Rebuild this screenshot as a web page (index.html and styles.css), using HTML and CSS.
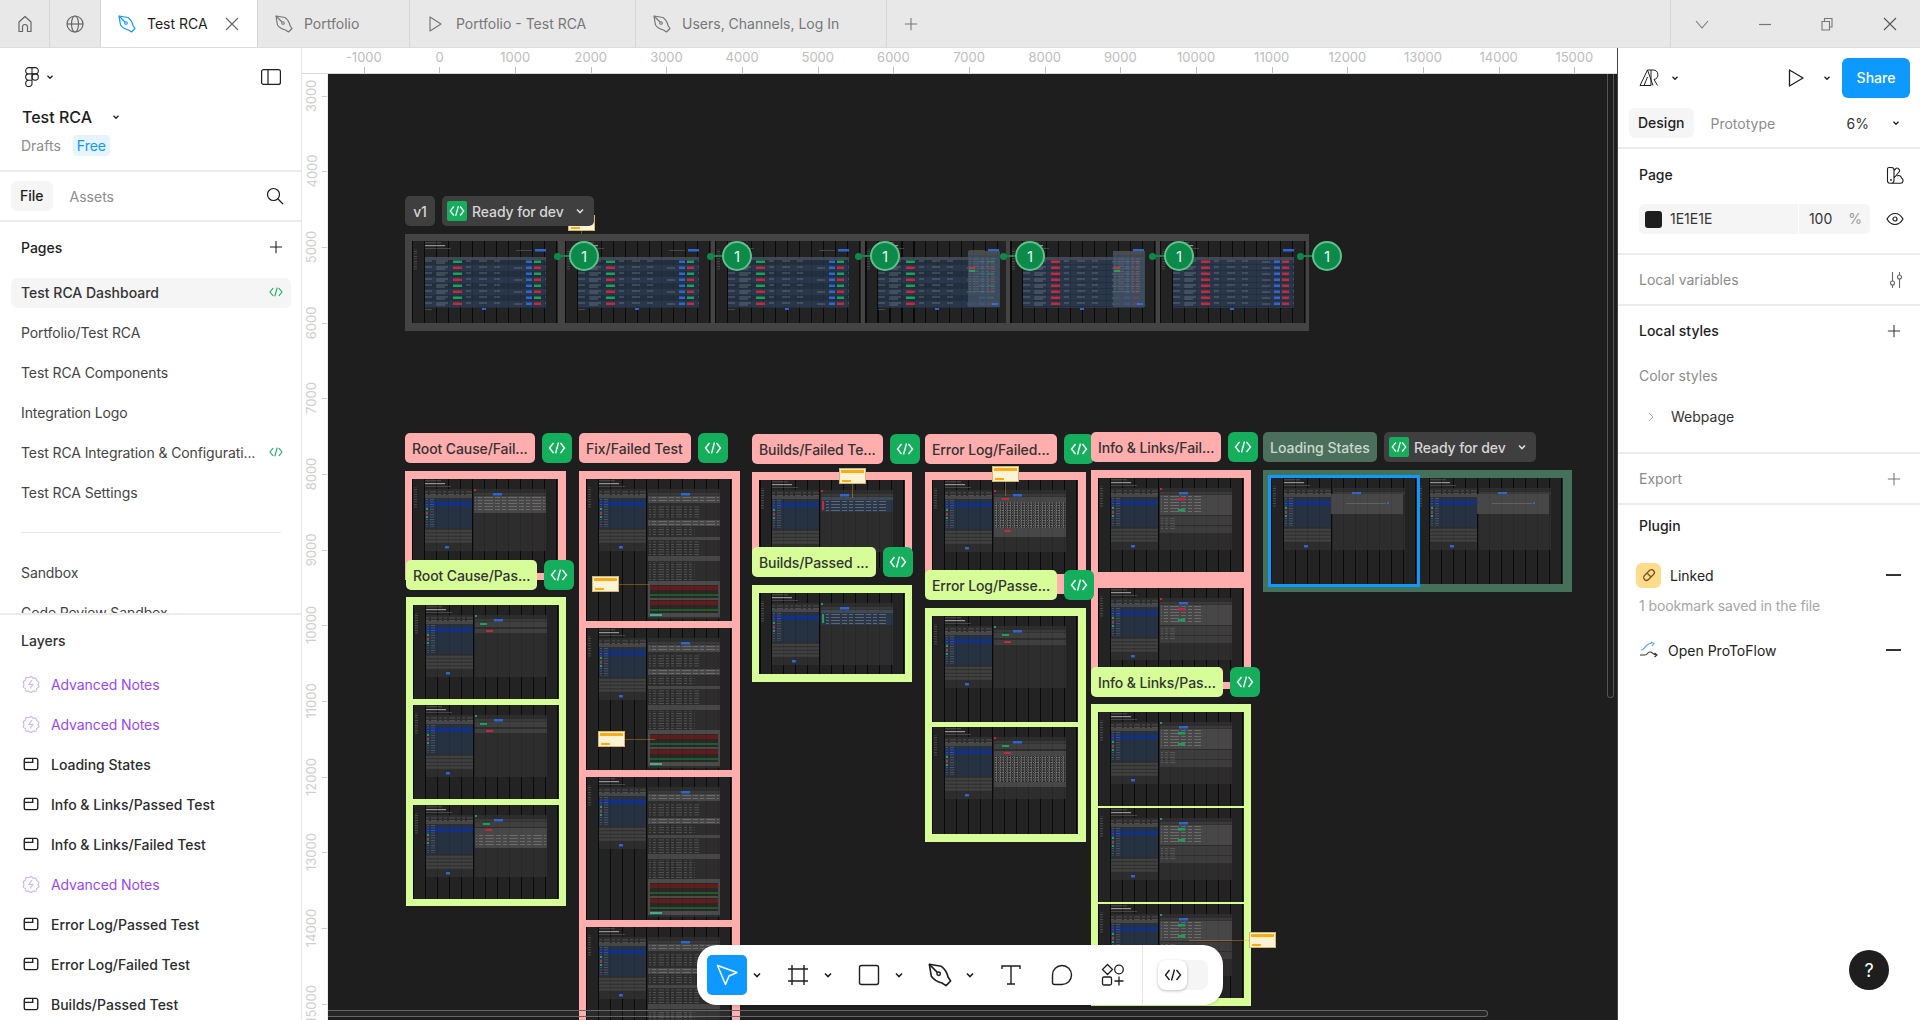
FILE: index.html
```html
<!DOCTYPE html>
<html lang="en">
<head>
    <meta charset="UTF-8">
    <title>Test RCA</title>
    <link rel="stylesheet" href="styles.css">
</head>
<body>
    <!-- shared icons and the tiny frame previews -->
    <svg class="defs" aria-hidden="true">
        <symbol id="i-nib" viewBox="0 0 18 18"><path d="M1 1 10 2.500Q14 5.500 15 10.500L17 13.500 13.500 17 10.500 15Q5.500 14 2.500 10Z" fill="none" stroke="currentColor" stroke-width="1.200" stroke-linejoin="round"/><path d="M1 1 7 7" stroke="currentColor" stroke-width="1.200"/><circle cx="8" cy="8" r="1.300" fill="none" stroke="currentColor" stroke-width="1.100"/></symbol>
        <symbol id="i-chev" viewBox="0 0 10 10"><path d="M2.500 3.800 5 6.300l2.500-2.500" fill="none" stroke="currentColor" stroke-width="1.300"/></symbol>
        <symbol id="i-plus" viewBox="0 0 16 16"><path d="M8 1v14M1 8h14" stroke="currentColor" stroke-width="1.200"/></symbol>
        <symbol id="i-code" viewBox="0 0 20 20"><path d="M6.500 5 2.500 10l4 5M13.500 5l4 5-4 5M11.500 4.500l-3 11" fill="none" stroke="currentColor" stroke-width="1.400"/></symbol>
        <symbol id="i-frame" viewBox="0 0 16 16"><path d="M2 4.500A1.500 1.500 0 0 1 3.500 3h9A1.500 1.500 0 0 1 14 4.500v7a1.500 1.500 0 0 1-1.500 1.500h-9A1.500 1.500 0 0 1 2 11.500zM2 6.500h7.500V3" fill="none" stroke="#1e1e1e" stroke-width="1.200"/></symbol>
        <symbol id="i-note" viewBox="0 0 18 18"><path d="m9 1.500 2.200 1.600 2.700-.1.800 2.600 2.200 1.600L16 9.500l.9 2.600-2.200 1.500-.8 2.600-2.700-.1L9 17.700l-2.200-1.600-2.700.1-.8-2.600-2.200-1.500.9-2.600-.9-2.700 2.200-1.600.8-2.600 2.700.1z" fill="none" stroke="#cdb4f5" stroke-width="1.100"/><path d="M10 5 7 9.500h4L8 13.500" fill="none" stroke="#cdb4f5" stroke-width="1.100"/></symbol>

        <pattern id="txt" width="24" height="3" patternUnits="userSpaceOnUse"><path d="M0 .5h9M11 .5h5M18 .5h4" stroke="#a0a0a0" stroke-width=".6"/></pattern>
        <pattern id="txt-dim" width="18" height="2.500" patternUnits="userSpaceOnUse"><path d="M0 .5h6M8 .5h3M13 .5h3" stroke="#808080" stroke-width=".6"/></pattern>
        <pattern id="noise" width="7" height="2.500" patternUnits="userSpaceOnUse"><path d="M0 .5h2M3 .5h1M5 .5h1.500M1 1.700h1.500M4 1.700h2" stroke="#d0d0d0" stroke-width=".6"/></pattern>
        <pattern id="row-rg" width="121" height="12" patternUnits="userSpaceOnUse"><rect width="121" height="6" fill="#2c3d55"/><rect y="6" width="121" height="6" fill="#223245"/><rect x="1" y="1.500" width="7" height="2.500" fill="#f02b42"/><rect x="1" y="7.500" width="7" height="2.500" fill="#18c268"/><rect x="41" y="1.500" width="9" height="2.500" fill="#f02b42"/><rect x="41" y="7.500" width="9" height="2.500" fill="#18c268"/><rect x="114" y="1.500" width="6" height="2.500" fill="#3078ff"/><rect x="114" y="7.500" width="6" height="2.500" fill="#3078ff"/><path d="M12 2h8M24 2h12M24 4h9M54 2h5M67 2h8M82 2h6M102 3h8M12 8h8M24 8h12M24 10h9M54 8h5M67 8h8M82 8h6" stroke="#98a2ad" stroke-width=".6"/></pattern>
        <pattern id="row-red" width="121" height="6" patternUnits="userSpaceOnUse"><rect width="121" height="6" fill="#2c3d55"/><rect y="5.500" width="121" height=".5" fill="#1c2838"/><rect x="1" y="1.500" width="7" height="2.500" fill="#f02b42"/><rect x="41" y="1.500" width="9" height="2.500" fill="#f02b42"/><rect x="114" y="1.500" width="6" height="2.500" fill="#3078ff"/><path d="M12 2h8M24 2h12M24 4h9M54 2h5M67 2h8M82 2h6M102 3h8" stroke="#98a2ad" stroke-width=".6"/></pattern>

        <symbol id="t-head" overflow="visible">
            <rect x="2" y="8" width="3" height="22" fill="url(#txt-dim)"/>
            <rect x="13" y="1.500" width="16" height=".7" fill="#777"/>
            <rect x="13" y="4" width="20" height="1.200" fill="#b0b0b0"/>
            <rect x="13" y="7" width="26" height=".7" fill="#666"/>
        </symbol>
        <symbol id="t-table" overflow="visible">
            <use href="#t-head"/>
            <rect x="123" y="8" width="11" height="2.500" fill="#3078ff"/>
            <rect x="104" y="9" width="16" height="1" fill="#505050"/>
            <rect x="13" y="16" width="121" height="3" fill="#485462"/>
            <rect x="13" y="19" width="121" height="48" fill="url(#row-rg)"/>
            <rect x="70" y="67" width="4" height="2" fill="#3078ff"/>
            <rect x="13" y="68" width="7" height=".7" fill="#666"/>
        </symbol>
        <symbol id="t-table-red" overflow="visible">
            <use href="#t-head"/>
            <rect x="123" y="8" width="11" height="2.500" fill="#3078ff"/>
            <rect x="13" y="16" width="121" height="3" fill="#485462"/>
            <rect x="13" y="19" width="121" height="48" fill="url(#row-red)"/>
            <rect x="70" y="67" width="4" height="2" fill="#3078ff"/>
        </symbol>
        <symbol id="t-side" overflow="visible">
            <rect x="103" y="10" width="32" height="56" fill="#425264"/>
            <rect x="103" y="10" width="31" height="4" fill="#555"/>
            <rect x="104" y="16" width="26" height="36" fill="url(#txt-dim)"/>
            <rect x="104" y="26" width="6" height="2" fill="#f02b42"/>
            <rect x="104" y="29" width="6" height="2" fill="#18c268"/>
            <rect x="127" y="62" width="6" height="2" fill="#3078ff"/>
        </symbol>
        <symbol id="t-left" overflow="visible">
            <use href="#t-head"/>
            <rect x="13" y="10" width="47" height="62" fill="#303030"/>
            <rect x="13" y="11" width="47" height="5" fill="url(#txt-dim)"/>
            <rect x="13" y="16" width="47" height="3" fill="#505050"/>
            <rect x="13" y="19" width="47" height="30" fill="#27354a"/>
            <rect x="13" y="23" width="47" height="4" fill="#113498"/>
            <rect x="14" y="20" width="8" height="28" fill="url(#txt-dim)"/>
            <rect x="14" y="29" width="2" height="2" fill="#18c268"/>
            <rect x="14" y="37" width="2" height="2" fill="#18c268"/>
            <rect x="14" y="33" width="2" height="2" fill="#f02b42"/>
            <path d="M13 52h47M13 55.500h47M13 59h47M13 62.500h47" stroke="#484848" stroke-width="2.400"/>
            <rect x="33" y="67" width="4" height="2.500" fill="#3078ff"/>
        </symbol>
        <symbol id="t-right" overflow="visible">
            <rect x="62" y="10" width="72" height="62" fill="#303030"/>
            <rect x="62" y="14" width="72" height="2.500" fill="#404040"/>
            <rect x="81" y="14" width="9" height="2.500" fill="#3078ff"/>
        </symbol>
        <symbol id="d-root-fail" overflow="visible">
            <use href="#t-right"/><rect x="62" y="10" width="2" height="2" fill="#f02b42"/>
            <rect x="62" y="17" width="72" height="17" fill="#505050"/>
            <rect x="63" y="18" width="70" height="15" fill="url(#txt)"/>
        </symbol>
        <symbol id="d-root-pass" overflow="visible">
            <use href="#t-right"/><rect x="62" y="10" width="2" height="2" fill="#18c268"/>
            <rect x="62" y="17" width="72" height="5" fill="#464646"/>
            <rect x="67" y="18" width="7" height="2" fill="#18c268"/>
            <rect x="62" y="24" width="72" height="4" fill="#464646"/>
            <rect x="73" y="25" width="7" height="2" fill="#f02b42"/>
        </symbol>
        <symbol id="d-root-mix" overflow="visible">
            <use href="#t-right"/><rect x="62" y="10" width="2" height="2" fill="#18c268"/>
            <rect x="62" y="17" width="72" height="5" fill="#464646"/>
            <rect x="70" y="18" width="7" height="2" fill="#18c268"/>
            <rect x="62" y="23" width="72" height="20" fill="#505050"/>
            <rect x="72" y="24" width="7" height="2" fill="#f02b42"/>
            <rect x="63" y="28" width="70" height="14" fill="url(#txt)"/>
        </symbol>
        <symbol id="d-fix" overflow="visible">
            <use href="#t-left"/>
            <rect x="62" y="10" width="72" height="130" fill="#303030"/>
            <rect x="62" y="14" width="72" height="2.500" fill="#404040"/>
            <rect x="95" y="14" width="9" height="2.500" fill="#3078ff"/>
            <rect x="62" y="17" width="72" height="7" fill="#505050"/>
            <rect x="63" y="18" width="70" height="6" fill="url(#txt)"/>
            <rect x="63" y="26" width="50" height="14" fill="url(#txt-dim)"/>
            <rect x="62" y="41" width="72" height="6" fill="#505050"/>
            <rect x="63" y="42" width="70" height="4" fill="url(#txt)"/>
            <rect x="63" y="48" width="46" height="9" fill="url(#txt-dim)"/>
            <rect x="62" y="58" width="72" height="3" fill="#505050"/>
            <rect x="63" y="62" width="50" height="14" fill="url(#txt-dim)"/>
            <rect x="62" y="77" width="72" height="5" fill="#505050"/>
            <rect x="63" y="83" width="46" height="18" fill="url(#txt-dim)"/>
            <rect x="62" y="102" width="72" height="36" fill="#565656"/>
            <rect x="64" y="106" width="68" height="13" fill="#2a2a2a"/>
            <rect x="64" y="107" width="68" height="4" fill="#741a1a"/>
            <rect x="64" y="115" width="68" height="2" fill="#206a2d"/>
            <rect x="64" y="121" width="68" height="13" fill="#2a2a2a"/>
            <rect x="64" y="122" width="68" height="4" fill="#741a1a"/>
            <rect x="64" y="130" width="68" height="2" fill="#206a2d"/>
            <rect x="64" y="135" width="12" height="2" fill="#45d4ac"/>
        </symbol>
        <symbol id="d-build-fail" overflow="visible">
            <use href="#t-right"/><rect x="62" y="10" width="2" height="2" fill="#f02b42"/>
            <rect x="62" y="17" width="72" height="3" fill="#485462"/>
            <rect x="62" y="20" width="72" height="12" fill="#2c3d55"/>
            <rect x="63" y="21" width="2" height="9" fill="#f02b42"/>
            <rect x="67" y="20" width="60" height="12" fill="url(#txt)"/>
        </symbol>
        <symbol id="d-build-pass" overflow="visible">
            <use href="#t-right"/><rect x="62" y="10" width="2" height="2" fill="#18c268"/>
            <rect x="62" y="17" width="72" height="3" fill="#485462"/>
            <rect x="62" y="20" width="72" height="12" fill="#2c3d55"/>
            <rect x="63" y="21" width="2" height="9" fill="#18c268"/>
            <rect x="67" y="20" width="60" height="12" fill="url(#txt)"/>
        </symbol>
        <symbol id="d-log-fail" overflow="visible">
            <use href="#t-right"/><rect x="62" y="10" width="2" height="2" fill="#f02b42"/>
            <rect x="62" y="17" width="72" height="40" fill="#505050"/>
            <rect x="70" y="18" width="7" height="2" fill="#f02b42"/>
            <rect x="63" y="22" width="70" height="26" fill="#2a2a2a"/>
            <rect x="63" y="22" width="70" height="26" fill="url(#noise)"/>
            <rect x="72" y="50" width="7" height="2" fill="#f02b42"/>
        </symbol>
        <symbol id="d-log-pass" overflow="visible">
            <use href="#t-right"/><rect x="62" y="10" width="2" height="2" fill="#18c268"/>
            <rect x="62" y="17" width="72" height="5" fill="#464646"/>
            <rect x="70" y="18" width="7" height="2" fill="#18c268"/>
            <rect x="62" y="24" width="72" height="5" fill="#464646"/>
            <rect x="72" y="25" width="7" height="2" fill="#f02b42"/>
        </symbol>
        <symbol id="d-log-mix" overflow="visible">
            <use href="#t-right"/><rect x="62" y="10" width="2" height="2" fill="#f02b42"/>
            <rect x="62" y="17" width="72" height="5" fill="#464646"/>
            <rect x="70" y="18" width="7" height="2" fill="#18c268"/>
            <rect x="62" y="24" width="72" height="36" fill="#505050"/>
            <rect x="72" y="25" width="7" height="2" fill="#f02b42"/>
            <rect x="63" y="29" width="70" height="26" fill="#2a2a2a"/>
            <rect x="63" y="29" width="70" height="26" fill="url(#noise)"/>
        </symbol>
        <symbol id="d-info-fail" overflow="visible">
            <use href="#t-right"/><rect x="62" y="10" width="2" height="2" fill="#f02b42"/>
            <rect x="62" y="17" width="72" height="20" fill="#505050"/>
            <rect x="63" y="18" width="40" height="18" fill="url(#txt)"/>
            <rect x="80" y="20" width="7" height="2.500" fill="#f02b42"/>
            <rect x="80" y="31" width="7" height="2.500" fill="#18c268"/>
            <rect x="62" y="38" width="72" height="9" fill="#444"/>
            <rect x="62" y="48" width="72" height="7" fill="#444"/>
            <rect x="63" y="40" width="14" height="12" fill="url(#txt-dim)"/>
        </symbol>
        <symbol id="d-info-pass" overflow="visible">
            <use href="#t-right"/><rect x="62" y="10" width="2" height="2" fill="#18c268"/>
            <rect x="62" y="17" width="72" height="20" fill="#505050"/>
            <rect x="63" y="18" width="40" height="18" fill="url(#txt)"/>
            <rect x="80" y="20" width="7" height="2.500" fill="#18c268"/>
            <rect x="80" y="31" width="7" height="2.500" fill="#18c268"/>
            <rect x="62" y="38" width="72" height="9" fill="#444"/>
            <rect x="62" y="48" width="72" height="7" fill="#444"/>
            <rect x="63" y="40" width="14" height="12" fill="url(#txt-dim)"/>
        </symbol>
        <symbol id="d-load" overflow="visible">
            <use href="#t-right"/>
            <rect x="60" y="16" width="72" height="20" fill="#505050"/>
            <rect x="75" y="25" width="40" height=".8" fill="#7a7a7a"/>
            <rect x="116" y="24" width="2" height="2" fill="#3078ff"/>
        </symbol>
    </svg>

    <header class="tabbar">
        <div class="tab tab-icon">
            <svg width="18" height="20" viewBox="0 0 18 20"><path d="M3 17.500V8l6-5.500L15 8v9.500h-3.500V13a2.500 2.500 0 0 0-5 0v4.500z" fill="none" stroke="currentColor" stroke-width="1.200" stroke-linejoin="round"/></svg>
        </div>
        <div class="tab tab-icon">
            <svg width="20" height="20" viewBox="0 0 20 20"><circle cx="10" cy="10" r="8" fill="none" stroke="currentColor" stroke-width="1.200"/><ellipse cx="10" cy="10" rx="3.500" ry="8" fill="none" stroke="currentColor" stroke-width="1.200"/><path d="M2 10h16" stroke="currentColor" stroke-width="1.200"/></svg>
        </div>
        <div class="tab tab-active tab-rca">
            <svg class="tab-glyph" width="18" height="18"><use href="#i-nib"/></svg>
            <span class="tab-title">Test RCA</span>
            <svg class="tab-close" width="14" height="14" viewBox="0 0 14 14"><path d="m1 1 12 12M13 1 1 13" stroke="#666" stroke-width="1.100"/></svg>
        </div>
        <div class="tab tab-portfolio">
            <svg class="tab-glyph" width="18" height="18"><use href="#i-nib"/></svg>
            <span class="tab-title">Portfolio</span>
        </div>
        <div class="tab tab-proto">
            <svg class="tab-glyph" width="18" height="20" viewBox="0 0 18 20"><path d="M3 3v14l11-7z" fill="none" stroke="currentColor" stroke-width="1.200" stroke-linejoin="round"/></svg>
            <span class="tab-title">Portfolio - Test RCA</span>
        </div>
        <div class="tab tab-users">
            <svg class="tab-glyph" width="18" height="18"><use href="#i-nib"/></svg>
            <span class="tab-title">Users, Channels, Log In</span>
        </div>
        <div class="tab-add"><svg width="14" height="14"><use href="#i-plus"/></svg></div>
        <div class="window-controls">
            <svg width="14" height="14" viewBox="0 0 14 14"><path d="m1 4 6 7 6-7" fill="none" stroke="#777" stroke-width="1.100"/></svg>
            <svg width="14" height="14" viewBox="0 0 14 14"><path d="M1 7.500h12" stroke="#777" stroke-width="1.200"/></svg>
            <svg width="14" height="14" viewBox="0 0 14 14"><path d="M2 4.500h7.500V13H2zM4.500 4.500V1.500H12V10H9.500" fill="none" stroke="#777" stroke-width="1.100"/></svg>
            <svg width="14" height="14" viewBox="0 0 14 14"><path d="m1 1 12 12M13 1 1 13" stroke="#555" stroke-width="1.100"/></svg>
        </div>
    </header>

    <div class="workspace">
        <aside class="left-panel">
            <section class="file-head">
                <div class="file-tools">
                    <span class="logo-wrap">
                        <svg width="14" height="20" viewBox="0 0 14 20"><path d="M7 .6H3.800a3.150 3.150 0 0 0 0 6.300H7zM7 .6h3.200a3.150 3.150 0 0 1 0 6.300H7zM7 6.900H3.800a3.150 3.150 0 0 0 0 6.300H7zM7 13.200H3.800a3.150 3.150 0 1 0 3.200 3.150z" fill="none" stroke="#1e1e1e" stroke-width="1.100"/><circle cx="10.200" cy="10.050" r="3.150" fill="none" stroke="#1e1e1e" stroke-width="1.100"/></svg>
                        <svg class="chev" width="10" height="10"><use href="#i-chev"/></svg>
                    </span>
                    <svg width="20" height="16" viewBox="0 0 20 16"><rect x=".6" y=".6" width="18.800" height="14.800" rx="2" fill="none" stroke="#1e1e1e" stroke-width="1.200"/><path d="M7 1v14" stroke="#1e1e1e" stroke-width="1.200"/></svg>
                </div>
                <div class="file-name">Test RCA <svg class="chev" width="10" height="10"><use href="#i-chev"/></svg></div>
                <div class="file-meta"><span>Drafts</span><span class="plan">Free</span></div>
            </section>

            <div class="panel-tabs">
                <span class="pill-tab">File</span>
                <span class="dim-tab">Assets</span>
                <svg class="search" width="18" height="18" viewBox="0 0 18 18"><circle cx="7.500" cy="7.500" r="6" fill="none" stroke="#1e1e1e" stroke-width="1.200"/><path d="m12 12 5 5" stroke="#1e1e1e" stroke-width="1.200"/></svg>
            </div>

            <section class="pages">
                <div class="pages-head"><span>Pages</span><svg width="14" height="14"><use href="#i-plus"/></svg></div>
                <div class="page-row page-current"><span>Test RCA Dashboard</span><svg class="page-code" width="16" height="16"><use href="#i-code"/></svg></div>
                <div class="page-row"><span>Portfolio/Test RCA</span></div>
                <div class="page-row"><span>Test RCA Components</span></div>
                <div class="page-row"><span>Integration Logo</span></div>
                <div class="page-row"><span>Test RCA Integration &amp; Configurati...</span><svg class="page-code" width="16" height="16"><use href="#i-code"/></svg></div>
                <div class="page-row"><span>Test RCA Settings</span></div>
                <div class="page-divider"></div>
                <div class="page-row"><span>Sandbox</span></div>
                <div class="page-row"><span>Code Review Sandbox</span></div>
            </section>

            <section class="layers">
                <div class="layers-head">Layers</div>
                <div class="layer layer-note"><svg width="18" height="18"><use href="#i-note"/></svg>Advanced Notes</div>
                <div class="layer layer-note"><svg width="18" height="18"><use href="#i-note"/></svg>Advanced Notes</div>
                <div class="layer"><svg width="18" height="18"><use href="#i-frame"/></svg>Loading States</div>
                <div class="layer"><svg width="18" height="18"><use href="#i-frame"/></svg>Info &amp; Links/Passed Test</div>
                <div class="layer"><svg width="18" height="18"><use href="#i-frame"/></svg>Info &amp; Links/Failed Test</div>
                <div class="layer layer-note"><svg width="18" height="18"><use href="#i-note"/></svg>Advanced Notes</div>
                <div class="layer"><svg width="18" height="18"><use href="#i-frame"/></svg>Error Log/Passed Test</div>
                <div class="layer"><svg width="18" height="18"><use href="#i-frame"/></svg>Error Log/Failed Test</div>
                <div class="layer"><svg width="18" height="18"><use href="#i-frame"/></svg>Builds/Passed Test</div>
            </section>
        </aside>

        <main class="stage">
            <div class="ruler-top">
                <div class="ruler-corner"></div>
                <div class="ruler-h">
                    <span>-1000</span><span>0</span><span>1000</span><span>2000</span><span>3000</span><span>4000</span><span>5000</span><span>6000</span><span>7000</span><span>8000</span><span>9000</span><span>10000</span><span>11000</span><span>12000</span><span>13000</span><span>14000</span><span>15000</span>
                </div>
            </div>
            <div class="stage-body">
                <div class="ruler-v">
                    <span><b>3000</b></span><span><b>4000</b></span><span><b>5000</b></span><span><b>6000</b></span><span><b>7000</b></span><span><b>8000</b></span><span><b>9000</b></span><span><b>10000</b></span><span><b>11000</b></span><span><b>12000</b></span><span><b>13000</b></span><span><b>14000</b></span><span><b>15000</b></span>
                </div>
                <div class="canvas">
                    <!-- v1 row -->
                    <div class="sticky sticky-v1 line-down"></div>
                    <div class="tag-row at-v1">
                        <span class="chip chip-v1">v1</span>
                        <span class="chip chip-ready"><span class="chip-code"><svg width="18" height="18"><use href="#i-code"/></svg></span>Ready for dev<svg class="chev" width="12" height="12"><use href="#i-chev"/></svg></span>
                    </div>
                    <div class="frame-strip">
                        <svg class="thumb strip-1"><use href="#t-table"/></svg>
                        <svg class="thumb"><use href="#t-table"/></svg>
                        <svg class="thumb"><use href="#t-table"/></svg>
                        <svg class="thumb strip-4"><use href="#t-table"/><use href="#t-side"/></svg>
                        <svg class="thumb"><use href="#t-table-red"/><use href="#t-side"/></svg>
                        <svg class="thumb"><use href="#t-table-red"/></svg>
                    </div>
                    <span class="badge b1">1</span>
                    <span class="badge b2">1</span>
                    <span class="badge b3">1</span>
                    <span class="badge b4">1</span>
                    <span class="badge b5">1</span>
                    <span class="badge b6">1</span>

                    <!-- section frames -->
                    <div class="frame pink f-root-fail">
                        <svg class="thumb h94"><use href="#t-left"/><use href="#d-root-fail"/></svg>
                    </div>
                    <div class="frame green f-root-pass">
                        <svg class="thumb h94"><use href="#t-left"/><use href="#d-root-pass"/></svg>
                        <svg class="thumb h94"><use href="#t-left"/><use href="#d-root-pass"/></svg>
                        <svg class="thumb h94"><use href="#t-left"/><use href="#d-root-mix"/></svg>
                    </div>
                    <div class="frame pink f-fix">
                        <svg class="thumb h142"><use href="#d-fix"/></svg>
                        <svg class="thumb h142"><use href="#d-fix"/></svg>
                        <svg class="thumb h143"><use href="#d-fix"/></svg>
                        <svg class="thumb h142"><use href="#d-fix"/></svg>
                    </div>
                    <div class="frame pink f-build-fail">
                        <svg class="thumb h94"><use href="#t-left"/><use href="#d-build-fail"/></svg>
                    </div>
                    <div class="frame green f-build-pass">
                        <svg class="thumb h81"><use href="#t-left"/><use href="#d-build-pass"/></svg>
                    </div>
                    <div class="frame pink f-log-fail">
                        <svg class="thumb h94"><use href="#t-left"/><use href="#d-log-fail"/></svg>
                    </div>
                    <div class="frame green f-log-pass">
                        <svg class="thumb h106"><use href="#t-left"/><use href="#d-log-pass"/></svg>
                        <svg class="thumb h107"><use href="#t-left"/><use href="#d-log-mix"/></svg>
                    </div>
                    <div class="frame pink f-info-fail">
                        <svg class="thumb h94"><use href="#t-left"/><use href="#d-info-fail"/></svg>
                        <svg class="thumb h94"><use href="#t-left"/><use href="#d-info-fail"/></svg>
                    </div>
                    <div class="frame green f-info-pass">
                        <svg class="thumb h94"><use href="#t-left"/><use href="#d-info-pass"/></svg>
                        <svg class="thumb h94"><use href="#t-left"/><use href="#d-info-pass"/></svg>
                        <svg class="thumb h94"><use href="#t-left"/><use href="#d-info-pass"/></svg>
                    </div>
                    <div class="frame teal f-load">
                        <svg class="thumb h106 thumb-selected"><use href="#t-left"/><use href="#d-load"/></svg>
                        <svg class="thumb h106"><use href="#t-left"/><use href="#d-load"/></svg>
                    </div>

                    <div class="sticky sticky-fix-1 line-right"></div>
                    <div class="sticky sticky-fix-2 line-right"></div>
                    <div class="sticky sticky-build line-down"></div>
                    <div class="sticky sticky-log line-down"></div>
                    <div class="sticky sticky-info line-left"></div>

                    <!-- section labels -->
                    <div class="tag-row at-root-fail"><span class="tag tag-pink">Root Cause/Fail...</span><span class="code-btn"><svg width="20" height="20"><use href="#i-code"/></svg></span></div>
                    <div class="tag-row at-root-pass"><span class="tag tag-green">Root Cause/Pas...</span><span class="code-btn"><svg width="20" height="20"><use href="#i-code"/></svg></span></div>
                    <div class="tag-row at-fix"><span class="tag tag-pink">Fix/Failed Test</span><span class="code-btn"><svg width="20" height="20"><use href="#i-code"/></svg></span></div>
                    <div class="tag-row at-build-fail"><span class="tag tag-pink">Builds/Failed Te...</span><span class="code-btn"><svg width="20" height="20"><use href="#i-code"/></svg></span></div>
                    <div class="tag-row at-build-pass"><span class="tag tag-green">Builds/Passed ...</span><span class="code-btn"><svg width="20" height="20"><use href="#i-code"/></svg></span></div>
                    <div class="tag-row at-log-fail"><span class="tag tag-pink">Error Log/Failed...</span><span class="code-btn"><svg width="20" height="20"><use href="#i-code"/></svg></span></div>
                    <div class="tag-row at-log-pass"><span class="tag tag-green">Error Log/Passe...</span><span class="code-btn"><svg width="20" height="20"><use href="#i-code"/></svg></span></div>
                    <div class="tag-row at-info-fail"><span class="tag tag-pink">Info &amp; Links/Fail...</span><span class="code-btn"><svg width="20" height="20"><use href="#i-code"/></svg></span></div>
                    <div class="tag-row at-info-pass"><span class="tag tag-green">Info &amp; Links/Pas...</span><span class="code-btn"><svg width="20" height="20"><use href="#i-code"/></svg></span></div>
                    <div class="tag-row at-load">
                        <span class="tag tag-teal">Loading States</span>
                        <span class="chip chip-ready"><span class="chip-code"><svg width="18" height="18"><use href="#i-code"/></svg></span>Ready for dev<svg class="chev" width="12" height="12"><use href="#i-chev"/></svg></span>
                    </div>

                    <div class="scroll-v"></div>
                    <div class="scroll-h"></div>

                    <div class="toolbar">
                        <span class="tool tool-active">
                            <svg width="28" height="28" viewBox="0 0 28 28"><path d="M4.500 4.500 24 11.500l-8 3.500-3.500 8.500z" fill="none" stroke="#fff" stroke-width="1.500" stroke-linejoin="round"/></svg>
                        </span>
                        <span class="tool-more"><svg width="12" height="12"><use href="#i-chev"/></svg></span>
                        <span class="tool">
                            <svg width="24" height="24" viewBox="0 0 24 24"><path d="M6 2v20M18 2v20M2 6h20M2 18h20" stroke="#1e1e1e" stroke-width="1.400"/></svg>
                        </span>
                        <span class="tool-more"><svg width="12" height="12"><use href="#i-chev"/></svg></span>
                        <span class="tool">
                            <svg width="24" height="24" viewBox="0 0 24 24"><rect x="2.500" y="2.500" width="19" height="19" rx="2" fill="none" stroke="#1e1e1e" stroke-width="1.400"/></svg>
                        </span>
                        <span class="tool-more"><svg width="12" height="12"><use href="#i-chev"/></svg></span>
                        <span class="tool">
                            <svg width="24" height="24"><use href="#i-nib"/></svg>
                        </span>
                        <span class="tool-more"><svg width="12" height="12"><use href="#i-chev"/></svg></span>
                        <span class="tool tool-plain">
                            <svg width="24" height="24" viewBox="0 0 24 24"><path d="M3 6V3h18v3M12 3v18M8 21h8" fill="none" stroke="#1e1e1e" stroke-width="1.400"/></svg>
                        </span>
                        <span class="tool tool-plain">
                            <svg width="24" height="24" viewBox="0 0 24 24"><path d="M12 2.500a9.500 9.500 0 0 1 0 19H4.500a2 2 0 0 1-2-2V12A9.500 9.500 0 0 1 12 2.500z" fill="none" stroke="#1e1e1e" stroke-width="1.400"/></svg>
                        </span>
                        <span class="tool">
                            <svg width="24" height="24" viewBox="0 0 24 24"><path d="M6.500 1.500l5 5-5 5-5-5zM1.500 15.500A1.500 1.500 0 0 1 3 14h6a1.500 1.500 0 0 1 1.500 1.500v5A1.500 1.500 0 0 1 9 22H3a1.500 1.500 0 0 1-1.500-1.500zM18 13.500v9M13.500 18h9" fill="none" stroke="#1e1e1e" stroke-width="1.300"/><circle cx="18" cy="6.500" r="4.300" fill="none" stroke="#1e1e1e" stroke-width="1.300"/></svg>
                        </span>
                        <span class="tool-divider"></span>
                        <span class="dev-toggle"><span class="dev-knob"><svg width="20" height="20"><use href="#i-code"/></svg></span></span>
                    </div>
                </div>
            </div>
        </main>

        <aside class="right-panel">
            <section class="rp-top">
                <div class="rp-actions">
                    <span class="avatar-wrap">
                        <svg width="20" height="20" viewBox="0 0 20 20"><path d="M1 17.500 8.500 2H14a4.800 4.800 0 0 1 1 9.500l3.500 6M1 17.500h11V2M5 17.500 8.500 9M8.500 2l5.500 15.500" fill="none" stroke="#1e1e1e" stroke-width="1"/></svg>
                        <svg class="chev" width="10" height="10"><use href="#i-chev"/></svg>
                    </span>
                    <span class="play-wrap">
                        <svg width="18" height="20" viewBox="0 0 18 20"><path d="M2.500 2v16L16 10z" fill="none" stroke="#1e1e1e" stroke-width="1.300" stroke-linejoin="round"/></svg>
                        <svg class="chev" width="10" height="10"><use href="#i-chev"/></svg>
                    </span>
                    <span class="share">Share</span>
                </div>
                <div class="rp-tabs">
                    <span class="pill-tab">Design</span>
                    <span class="dim-tab">Prototype</span>
                    <span class="zoom-val">6%</span>
                    <svg class="chev" width="10" height="10"><use href="#i-chev"/></svg>
                </div>
            </section>

            <section class="rp-page">
                <div class="rp-row">
                    <span class="rp-title">Page</span>
                    <svg width="18" height="18" viewBox="0 0 18 18"><path d="M1.500 3A1.500 1.500 0 0 1 3 1.500h2.500A2.500 2.500 0 0 1 8 4v10.500a2.800 2.800 0 0 1-2.800 2.800H4a2.500 2.500 0 0 1-2.500-2.500zM8 4.500l2-2a1.500 1.500 0 0 1 2.200 0l.8.800a2 2 0 0 1 0 2.700l-5 6M5 17.300h9.500a2.800 2.800 0 0 0 1-5.300 3 3 0 0 0-4.500-2" fill="none" stroke="#1e1e1e" stroke-width="1.100"/><circle cx="5" cy="14" r=".9" fill="#1e1e1e"/></svg>
                </div>
                <div class="color-row">
                    <div class="color-field">
                        <span class="swatch"></span>
                        <span class="hex">1E1E1E</span>
                        <span class="opacity">100</span>
                        <span class="percent">%</span>
                    </div>
                    <svg width="18" height="18" viewBox="0 0 18 18"><path d="M1 9c2-3.500 4.800-5.500 8-5.500S15 5.500 17 9c-2 3.500-4.800 5.500-8 5.500S3 12.500 1 9z" fill="none" stroke="#1e1e1e" stroke-width="1.200"/><circle cx="9" cy="9" r="2" fill="none" stroke="#1e1e1e" stroke-width="1.200"/></svg>
                </div>
            </section>

            <section class="rp-vars">
                <span class="rp-dim">Local variables</span>
                <svg width="16" height="18" viewBox="0 0 16 18"><path d="M4.500 1v9M4.500 14v3M11.500 1v3M11.500 8v9" stroke="#666" stroke-width="1.100"/><circle cx="4.500" cy="12" r="2" fill="none" stroke="#666" stroke-width="1.100"/><circle cx="11.500" cy="6" r="2" fill="none" stroke="#666" stroke-width="1.100"/></svg>
            </section>

            <section class="rp-styles">
                <div class="rp-row rp-styles-head"><span class="rp-title">Local styles</span><svg width="14" height="14"><use href="#i-plus"/></svg></div>
                <div class="rp-dim rp-color-label">Color styles</div>
                <div class="style-item"><svg width="8" height="10" viewBox="0 0 8 10"><path d="m2 1 4 4-4 4" fill="none" stroke="#aaa"/></svg>Webpage</div>
            </section>

            <section class="rp-export">
                <span class="rp-dim">Export</span>
                <svg class="plus-dim" width="14" height="14"><use href="#i-plus"/></svg>
            </section>

            <section class="rp-plugin">
                <div class="rp-title">Plugin</div>
                <div class="plugin-item plugin-linked">
                    <span class="plugin-badge"><svg width="16" height="16" viewBox="0 0 16 16"><path d="m6.500 6.500 3 3M3.500 8.500l5-5a2.400 2.400 0 0 1 4 4l-5 5a2.400 2.400 0 0 1-4-4z" fill="none" stroke="#7a5320" stroke-width="1.300"/></svg></span>
                    <span>Linked</span>
                    <i class="minus"></i>
                </div>
                <div class="plugin-note">1 bookmark saved in the file</div>
                <div class="plugin-item">
                    <svg class="plugin-flow" width="20" height="18" viewBox="0 0 20 18"><path d="M2 9c3 0 3-2 5-4s3-3 6-3M12 1l3 1.500-2 2.500" fill="none" stroke="#5aa9f0" stroke-width="1.100"/><path d="M1 14h5c3 0 2-3 5-3s2 3 7 3M15.500 12l2.500 2-2.500 2" fill="none" stroke="#333" stroke-width="1.100"/></svg>
                    <span>Open ProToFlow</span>
                    <i class="minus"></i>
                </div>
            </section>

            <div class="help">?</div>
        </aside>
    </div>
</body>
</html>
```

FILE: styles.css
```css
* {
    box-sizing: border-box;
}
html, body {
    margin: 0;
    height: 100%;
}
body {
    display: flex;
    flex-direction: column;
    overflow: hidden;
    font-family: Inter, "Noto Sans", sans-serif;
    font-size: 14px;
    color: #333;
    background: #fff;
}
.defs {
    position: absolute;
    width: 0;
    height: 0;
}
svg {
    display: block;
    flex: none;
}
.chev {
    color: #1e1e1e;
}

/* tab strip */
.tabbar {
    display: flex;
    flex: none;
    height: 48px;
    background: #e8e8e8;
    border-bottom: 1px solid #dcdcdc;
    color: #777;
}
.tab {
    display: flex;
    align-items: center;
    height: 47px;
    border-right: 1px solid #d6d6d6;
    padding-left: 17px;
}
.tab-icon {
    justify-content: center;
    width: 50px;
    padding: 0;
    color: #666;
}
.tab-icon + .tab-icon {
    width: 51px;
}
.tab-glyph {
    margin-right: 11px;
}
.tab-active {
    background: #fff;
    color: #1e1e1e;
}
.tab-active .tab-glyph {
    color: #0d99ff;
}
.tab-rca {
    width: 157px;
}
.tab-close {
    margin-left: auto;
    margin-right: 18px;
}
.tab-portfolio {
    width: 152px;
}
.tab-proto {
    width: 226px;
}
.tab-users {
    width: 251px;
}
.tab-add {
    display: flex;
    align-items: center;
    justify-content: center;
    width: 48px;
    color: #777;
}
.window-controls {
    display: flex;
    align-items: center;
    gap: 48.7px;
    width: 250px;
    height: 47px;
    margin-left: auto;
    padding-left: 24px;
    border-left: 1px solid #d6d6d6;
}

.workspace {
    display: flex;
    flex: 1;
    min-height: 0;
}

/* left panel */
.left-panel {
    display: flex;
    flex-direction: column;
    flex: none;
    width: 302px;
    border-right: 1px solid #e6e6e6;
    color: #444;
}
.file-head {
    height: 124px;
    padding: 19px 20px 0 21px;
    border-bottom: 2px solid #ececec;
}
.file-tools {
    display: flex;
    align-items: center;
    justify-content: space-between;
    height: 20px;
}
.logo-wrap {
    display: flex;
    align-items: center;
    gap: 6px;
    margin-left: 4px;
}
.file-name {
    display: flex;
    align-items: center;
    gap: 19px;
    margin: 20px 0 0 1px;
    font-size: 16px;
    font-weight: 500;
    color: #1e1e1e;
}
.file-meta {
    display: flex;
    align-items: center;
    gap: 12px;
    margin-top: 8px;
    color: #8c8c8c;
}
.plan {
    padding: 2px 4px;
    border-radius: 4px;
    background: #e5f4ff;
    color: #0d99ff;
}
.panel-tabs {
    display: flex;
    flex: none;
    align-items: center;
    height: 50px;
    padding: 0 17px 0 11px;
    border-bottom: 2px solid #ececec;
}
.pill-tab {
    display: flex;
    align-items: center;
    height: 30px;
    padding: 0 9px 1px;
    border-radius: 6px;
    background: #f5f5f5;
    font-weight: 500;
    color: #1e1e1e;
}
.dim-tab {
    margin-left: 17px;
    color: #8c8c8c;
}
.search {
    margin-left: auto;
}
.pages {
    flex: none;
    height: 391px;
    padding: 0 10px 0 11px;
    overflow: hidden;
}
.pages-head {
    display: flex;
    align-items: center;
    justify-content: space-between;
    height: 50px;
    margin-bottom: 6px;
    padding: 0 8px 0 10px;
    font-weight: 500;
    color: #1e1e1e;
}
.page-row {
    display: flex;
    align-items: center;
    justify-content: space-between;
    height: 30px;
    margin-bottom: 10px;
    padding: 0 7px 2px 10px;
    border-radius: 6px;
    letter-spacing: -0.1px;
    white-space: nowrap;
}
.page-current {
    background: #f5f5f5;
    font-weight: 500;
    letter-spacing: 0;
    color: #333;
}
.page-code {
    color: #14ae5c;
}
.page-divider {
    height: 1px;
    margin: 24px 10px 25px;
    background: #e6e6e6;
}
.layers {
    flex: 1;
    min-height: 0;
    overflow: hidden;
    border-top: 2px solid #ececec;
}
.layers-head {
    display: flex;
    align-items: center;
    height: 50px;
    padding-left: 21px;
    font-weight: 500;
    color: #333;
}
.layer {
    display: flex;
    align-items: center;
    gap: 11px;
    height: 40px;
    padding: 0 0 2px 22px;
    font-weight: 500;
    color: #2c2c2c;
}
.layer-note {
    font-weight: 400;
    letter-spacing: -0.1px;
    color: #9747ff;
}

/* rulers and canvas */
.stage {
    display: flex;
    flex: 1;
    flex-direction: column;
    min-width: 0;
}
.ruler-top {
    display: flex;
    flex: none;
    height: 26px;
    border-bottom: 1px solid #d9d9d9;
}
.ruler-corner {
    flex: none;
    width: 26px;
}
.ruler-h {
    display: flex;
    flex: 1;
    overflow: hidden;
}
.ruler-h span {
    position: relative;
    flex: none;
    width: 75.67px;
    padding-top: 1px;
    text-align: center;
    line-height: 16px;
    font-size: 13px;
    color: #bdbdbd;
}
.ruler-h span:first-child {
    margin-left: -2px;
}
.ruler-h span::after {
    content: "";
    position: absolute;
    bottom: 0;
    left: 50%;
    width: 1px;
    height: 6px;
    background: #bdbdbd;
}
.stage-body {
    display: flex;
    flex: 1;
    min-height: 0;
}
.ruler-v {
    flex: none;
    width: 26px;
    overflow: hidden;
    border-right: 1px solid #eee;
}
.ruler-v span {
    position: relative;
    display: flex;
    align-items: center;
    justify-content: center;
    height: 75.67px;
    padding-right: 7px;
}
.ruler-v span:first-child {
    margin-top: -16px;
}
.ruler-v b {
    transform: rotate(-90deg);
    font-weight: 400;
    font-size: 13px;
    color: #cfcfcf;
}
.ruler-v span::after {
    content: "";
    position: absolute;
    top: 50%;
    right: 0;
    width: 5px;
    height: 1px;
    background: #cfcfcf;
}
.canvas {
    position: relative;
    flex: 1;
    overflow: hidden;
    background: #1e1e1e;
}
.thumb {
    width: 146px;
    height: 82px;
    background: repeating-linear-gradient(90deg, #0a0a0a 0 1.500px, #232323 1.500px 12px);
    overflow: hidden;
}
/* previews are see-through so the frame's column lines show across them */
.thumb > use {
    opacity: 0.8;
}
.h81 { height: 81px; }
.h94 { height: 94px; }
.h106 { height: 106px; }
.h107 { height: 107px; }
.h142 { height: 142px; }
.h143 { height: 143px; }
.thumb-selected {
    position: relative;
    outline: 3px solid #0d99ff;
}

/* version row */
.frame-strip {
    position: absolute;
    left: 77px;
    top: 160px;
    display: flex;
    gap: 4px;
    width: 904px;
    height: 97px;
    padding: 7px;
    background: #444;
}
.strip-1 {
    margin-right: 3px;
}
.strip-4 {
    width: 141px;
}
.badge {
    position: absolute;
    top: 167px;
    display: flex;
    align-items: center;
    justify-content: center;
    width: 30px;
    height: 30px;
    border: 2px solid #5fc08a;
    border-radius: 50%;
    background: #0b8a4a;
    font-size: 15px;
    color: #e9f7ef;
}
.badge::before {
    content: "";
    position: absolute;
    left: -17px;
    top: 9.500px;
    width: 7px;
    height: 7px;
    border-radius: 50%;
    background: #0b8a4a;
}
.badge::after {
    content: "";
    position: absolute;
    left: -10px;
    top: 12px;
    width: 8px;
    border-top: 2px dashed #0b8a4a;
}
.b1 { left: 241px; }
.b2 { left: 394px; }
.b3 { left: 542px; }
.b4 { left: 687px; }
.b5 { left: 836px; }
.b6 { left: 984px; }

/* free canvas frames */
.frame {
    position: absolute;
    display: flex;
    flex-direction: column;
    padding: 8px 7px;
    overflow: hidden;
}
.pink { background: #ffadad; }
.green { background: #d6fd97; }
.teal {
    flex-direction: row;
    padding: 8px;
    overflow: visible;
    background: #45705a;
}
.f-root-fail { left: 77px; top: 397px; width: 161px; height: 109px; }
.f-root-pass { left: 78px; top: 523px; width: 160px; height: 309px; gap: 6px; }
.f-fix { left: 251px; top: 397px; width: 161px; height: 560px; gap: 7px; }
.f-build-fail { left: 424px; top: 398px; width: 160px; height: 96px; }
.f-build-pass { left: 424px; top: 511px; width: 160px; height: 97px; }
.f-log-fail { left: 597px; top: 398px; width: 161px; height: 122px; }
.f-log-pass { left: 597px; top: 534px; width: 161px; height: 234px; gap: 5px; }
.f-info-fail { left: 763px; top: 396px; width: 160px; height: 219px; gap: 16px; }
.f-info-pass { left: 763px; top: 630px; width: 160px; height: 302px; gap: 2px; }
.f-load { left: 935px; top: 396px; width: 309px; height: 122px; }

.tag-row {
    position: absolute;
    display: flex;
    gap: 7px;
}
.at-v1 { left: 77px; top: 122px; }
.at-root-fail { left: 77px; top: 359px; }
.at-root-pass { left: 78px; top: 486px; }
.at-fix { left: 251px; top: 359px; }
.at-build-fail { left: 424px; top: 360px; }
.at-build-pass { left: 424px; top: 473px; }
.at-log-fail { left: 597px; top: 360px; }
.at-log-pass { left: 597px; top: 496px; }
.at-info-fail { left: 763px; top: 358px; }
.at-info-pass { left: 763px; top: 593px; }
.at-load { left: 935px; top: 358px; }
.at-fix .tag {
    width: 112px;
    letter-spacing: 0;
}
.tag {
    display: flex;
    align-items: center;
    height: 30px;
    padding: 0 7px;
    border-radius: 5px;
    font-size: 14px;
    font-weight: 500;
    letter-spacing: -0.1px;
    white-space: nowrap;
    color: #333;
}
.tag-pink { background: #ffadad; }
.tag-green { background: #d6fd97; }
.at-load .tag-teal {
    width: 114px;
    letter-spacing: 0;
    background: #4b6f5b;
    color: #c9d9cf;
}
.code-btn {
    display: flex;
    align-items: center;
    justify-content: center;
    width: 30px;
    height: 30px;
    border-radius: 6px;
    background: #14ae5c;
    color: #fff;
}
.chip {
    display: flex;
    align-items: center;
    height: 30px;
    border-radius: 5px;
    background: #3f3f3f;
    font-size: 14px;
    font-weight: 500;
    letter-spacing: -0.1px;
    color: #d6d6d6;
}
.chip-v1 {
    justify-content: center;
    width: 30px;
}
.chip-ready {
    width: 152px;
    padding-left: 5px;
}
.chip-ready .chev {
    margin-left: 10px;
    color: #ddd;
}
.chip-code {
    display: flex;
    align-items: center;
    justify-content: center;
    width: 20px;
    height: 20px;
    margin-right: 5px;
    border-radius: 2px;
    background: #14ae5c;
    color: #fff;
}

/* sticky notes on the canvas */
.sticky {
    position: absolute;
    width: 27px;
    height: 16px;
    background: linear-gradient(#ffab19, #ffab19) 2px 11px / 9px 2px no-repeat, #fff3d6;
    border: 1px solid #d8b56c;
}
.sticky::before {
    content: "";
    position: absolute;
    left: 1px;
    top: 1px;
    right: 1px;
    height: 3px;
    background: #ffab19;
}
.sticky::after {
    content: "";
    position: absolute;
    background: rgba(255, 171, 25, 0.35);
}
.line-down::after {
    left: 12px;
    top: 15px;
    width: 1px;
    height: 14px;
}
.line-right::after {
    left: 26px;
    top: 7px;
    width: 30px;
    height: 1px;
}
.line-left::after {
    right: 26px;
    top: 7px;
    width: 60px;
    height: 1px;
}
.sticky-v1 { left: 240px; top: 141px; }
.sticky-fix-1 { left: 264px; top: 502px; }
.sticky-fix-2 { left: 270px; top: 657px; }
.sticky-build { left: 511px; top: 394px; }
.sticky-log { left: 664px; top: 392px; }
.sticky-info { left: 921px; top: 858px; }

/* canvas scrollbars */
.scroll-v {
    position: absolute;
    right: 3px;
    top: 0;
    width: 7px;
    height: 624px;
    border: 1px solid #555;
    border-top: 0;
    border-radius: 0 0 4px 4px;
}
.scroll-h {
    position: absolute;
    left: 0;
    bottom: 3px;
    width: 1160px;
    height: 7px;
    border: 1px solid #666;
    border-left: 0;
    border-radius: 0 4px 4px 0;
    background: rgba(255, 255, 255, 0.04);
}

/* bottom toolbar */
.toolbar {
    position: absolute;
    left: 369px;
    bottom: 15px;
    display: flex;
    align-items: center;
    width: 526px;
    height: 60px;
    padding-left: 10px;
    border-radius: 20px;
    background: #fff;
    box-shadow: 0 1px 3px rgba(0, 0, 0, 0.15);
}
.tool {
    display: flex;
    align-items: center;
    justify-content: center;
    width: 40px;
    height: 40px;
    border-radius: 5px;
    color: #1e1e1e;
}
.tool-active {
    background: #0d99ff;
}
.tool-plain {
    margin-right: 11px;
}
.tool-more {
    display: flex;
    justify-content: center;
    width: 20px;
    margin-right: 11px;
    color: #1e1e1e;
}
.tool-divider {
    width: 1px;
    height: 60px;
    margin-left: 9px;
    background: #e6e6e6;
}
.dev-toggle {
    width: 50px;
    height: 30px;
    margin-left: 15px;
    border-radius: 8px;
    background: #f5f5f5;
}
.dev-knob {
    display: flex;
    align-items: center;
    justify-content: center;
    width: 29px;
    height: 30px;
    border-radius: 8px;
    background: #fff;
    box-shadow: 0 1px 3px rgba(0, 0, 0, 0.25);
    color: #1e1e1e;
}

/* right panel */
.right-panel {
    position: relative;
    flex: none;
    width: 303px;
    border-left: 1px solid #444;
}
.right-panel section {
    border-bottom: 2px solid #ececec;
}
.rp-top {
    height: 101px;
    padding: 10px 10px 0 21px;
}
.rp-actions {
    display: flex;
    align-items: center;
    height: 40px;
}
.avatar-wrap {
    display: flex;
    align-items: center;
    gap: 11px;
}
.play-wrap {
    display: flex;
    align-items: center;
    gap: 17px;
    margin-left: auto;
    margin-right: 10px;
}
.share {
    display: flex;
    align-items: center;
    justify-content: center;
    width: 68px;
    height: 40px;
    padding-bottom: 2px;
    border-radius: 6px;
    background: #0d99ff;
    font-weight: 500;
    color: #fff;
}
.rp-tabs {
    display: flex;
    align-items: center;
    margin: 10px 0 0 -10px;
    padding-right: 9px;
}
.zoom-val {
    margin-left: auto;
    margin-right: 22px;
    color: #333;
}
.rp-page {
    height: 106px;
    padding: 16px 16px 0 21px;
}
.rp-row {
    display: flex;
    align-items: center;
    justify-content: space-between;
    height: 20px;
}
.rp-title {
    font-weight: 500;
    color: #1e1e1e;
}
.rp-row .rp-title {
    margin-top: -2px;
}
.rp-styles-head {
    padding-right: 3px;
}
.color-row {
    display: flex;
    align-items: center;
    justify-content: space-between;
    margin-top: 19px;
}
.color-field {
    display: flex;
    align-items: center;
    width: 231px;
    height: 30px;
    padding: 0 8px 0 6px;
    border-radius: 5px;
    background: #f5f5f5;
}
.swatch {
    width: 17px;
    height: 17px;
    border-radius: 3px;
    background: #1e1e1e;
}
.hex {
    flex: 1;
    margin: -2px 0 0 8px;
}
.opacity {
    display: flex;
    align-items: center;
    align-self: stretch;
    margin-right: 16px;
    padding: 0 0 2px 10px;
    border-left: 1px solid #fff;
}
.percent {
    margin-top: -2px;
    color: #999;
}
.rp-vars,
.rp-export {
    display: flex;
    align-items: center;
    justify-content: space-between;
    height: 51px;
    padding: 0 16px 0 21px;
}
.rp-export {
    padding-right: 19px;
}
.rp-dim {
    color: #8c8c8c;
}
.plus-dim {
    color: #777;
}
.rp-styles {
    height: 148px;
    padding: 15px 16px 0 21px;
}
.rp-color-label {
    margin-top: 26px;
}
.style-item {
    display: flex;
    align-items: center;
    gap: 16px;
    margin-top: 24px;
    padding-left: 8px;
    color: #333;
}
.right-panel .rp-plugin {
    padding: 12px 16px 0 21px;
    border-bottom: 0;
}
.plugin-item {
    display: flex;
    align-items: center;
    height: 26px;
    color: #222;
}
.plugin-linked {
    margin: 28px 0 0 -3px;
}
.plugin-badge {
    display: flex;
    align-items: center;
    justify-content: center;
    width: 25px;
    height: 25px;
    margin-right: 9px;
    border-radius: 6px;
    background: #ffdb8c;
}
.plugin-flow {
    margin-right: 9px;
}
.minus {
    width: 15px;
    height: 2px;
    margin-left: auto;
    margin-right: 3px;
    background: #333;
}
.plugin-note {
    height: 23px;
    margin-top: 9px;
    letter-spacing: -0.1px;
    color: #a6a6a6;
}
.plugin-note + .plugin-item {
    margin-top: 17px;
}
.help {
    position: absolute;
    right: 31px;
    bottom: 30px;
    display: flex;
    align-items: center;
    justify-content: center;
    width: 40px;
    height: 40px;
    border-radius: 50%;
    background: #1e1e1e;
    font-size: 18px;
    color: #fff;
}
```
